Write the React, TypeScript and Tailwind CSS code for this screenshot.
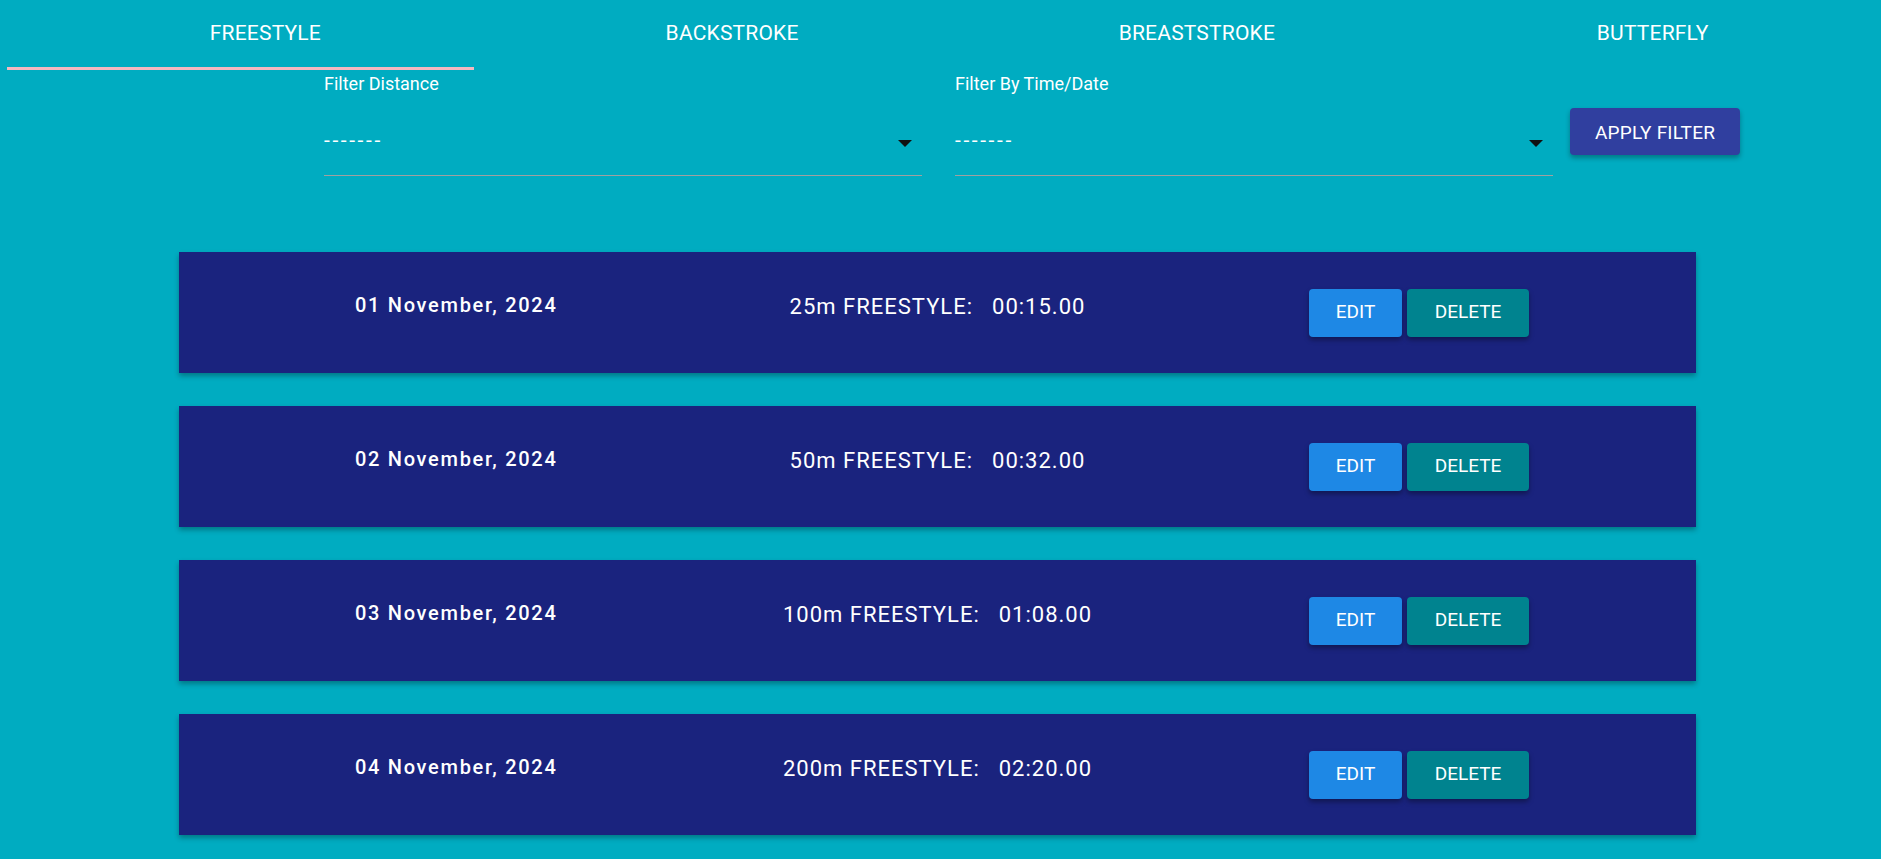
import { useState } from "react";

const tabs = [
  { label: "FREESTYLE", shift: "pl-[50px]" },
  { label: "BACKSTROKE", shift: "pl-[50px]" },
  { label: "BREASTSTROKE", shift: "pl-[46px]" },
  { label: "BUTTERFLY", shift: "pl-[24px]" },
];

const results = [
  { date: "01 November, 2024", event: "25m FREESTYLE:", time: "00:15.00" },
  { date: "02 November, 2024", event: "50m FREESTYLE:", time: "00:32.00" },
  { date: "03 November, 2024", event: "100m FREESTYLE:", time: "01:08.00" },
  { date: "04 November, 2024", event: "200m FREESTYLE:", time: "02:20.00" },
];

function FilterSelect({ label }: { label: string }) {
  return (
    <div className="w-[598px]">
      <div className="text-[18px] leading-none text-white">{label}</div>
      <div className="mt-[38px] flex items-center justify-between border-b border-[#a0a0a0] pb-[26px] pr-[10px]">
        <span className="text-[21px] leading-[18px] tracking-[2.6px] text-white">-------</span>
        <span className="mt-[6px] h-0 w-0 border-x-[7px] border-t-[7px] border-x-transparent border-t-[#111]" />
      </div>
    </div>
  );
}

export default function App() {
  const [active, setActive] = useState(0);

  return (
    <div
      className="min-h-[859px] bg-[#00acc1] pb-[24px] text-white"
      style={{ fontFamily: "Roboto, 'Noto Sans', sans-serif" }}
    >
      <div className="grid grid-cols-4 px-[7px]">
        {tabs.map((tab, i) => (
          <button
            key={tab.label}
            onClick={() => setActive(i)}
            className="flex h-[70px] flex-col"
          >
            <span
              className={`flex h-[67px] w-full items-center justify-center text-[21px] leading-none tracking-[0.2px] ${tab.shift}`}
            >
              {tab.label}
            </span>
            <span className={`h-[3px] w-full ${active === i ? "bg-[#f6b8c0]" : ""}`} />
          </button>
        ))}
      </div>

      <div className="ml-[324px] mt-[5px] flex items-start">
        <FilterSelect label="Filter Distance" />
        <div className="ml-[33px]">
          <FilterSelect label="Filter By Time/Date" />
        </div>
        <button className="ml-[17px] mt-[33px] h-[47px] w-[170px] rounded-[4px] bg-[#303f9f] pt-[3px] text-[19px] tracking-[0.2px] text-white shadow-[0_3px_5px_rgba(0,0,0,0.3)]">
          APPLY FILTER
        </button>
      </div>

      <div className="ml-[179px] mt-[76px] flex w-[1517px] flex-col gap-[33px]">
        {results.map((r) => (
          <div
            key={r.date}
            className="grid h-[121px] grid-cols-[1fr_auto_1fr] items-center bg-[#1a237e] shadow-[0_3px_5px_rgba(0,0,0,0.3)]"
          >
            <div className="pb-[16px] pl-[176px] text-[20px] font-medium leading-none tracking-[1.7px]">
              {r.date}
            </div>
            <div className="flex pb-[12px] text-[22px] leading-none tracking-[1px]">
              <span>{r.event}</span>
              <span className="ml-[19px]">{r.time}</span>
            </div>
            <div className="flex justify-end gap-[5px] pr-[167px]">
              <button className="h-[48px] w-[93px] rounded-[4px] bg-[#1e88e5] text-[19px] shadow-[0_3px_5px_rgba(0,0,0,0.35)]">
                EDIT
              </button>
              <button className="h-[48px] w-[122px] rounded-[4px] bg-[#00838f] text-[19px] shadow-[0_3px_5px_rgba(0,0,0,0.35)]">
                DELETE
              </button>
            </div>
          </div>
        ))}
      </div>
    </div>
  );
}
